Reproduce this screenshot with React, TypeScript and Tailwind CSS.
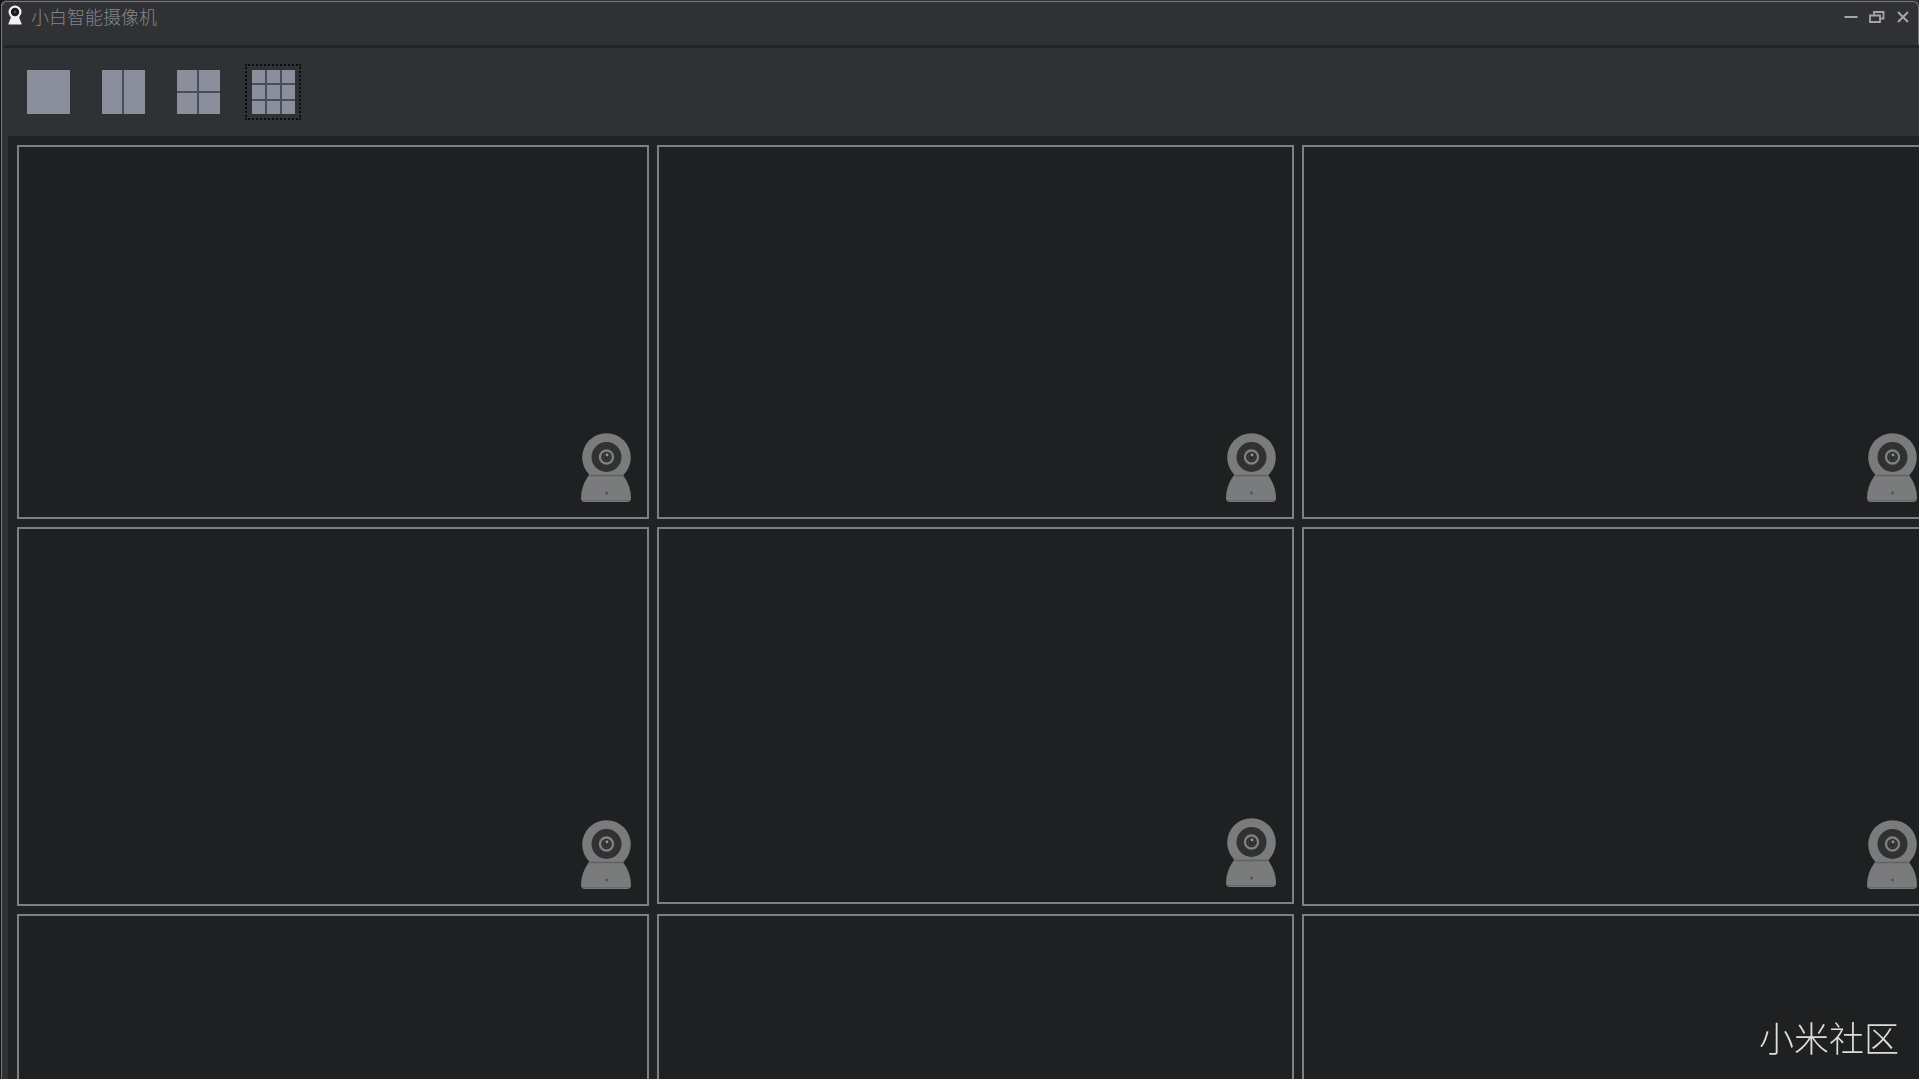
import React, { useState } from 'react';

const layouts = [
  { name: '单画面', cols: 'grid-cols-1', cells: 1 },
  { name: '双画面', cols: 'grid-cols-2', cells: 2 },
  { name: '四画面', cols: 'grid-cols-2', cells: 4 },
  { name: '九画面', cols: 'grid-cols-3', cells: 9 },
];

function Camera() {
  return (
    <svg viewBox="0 0 50 69" className="h-[69px] w-[50px]" aria-hidden="true">
      <path d="M8 42h34q8 11 8 23q0 4-4 4H4q-4 0-4-4Q0 53 8 42z" fill="#7a7b7c" />
      <circle cx="25.5" cy="24.5" r="24.3" fill="#7a7b7c" />
      <path d="M8.5 42.5h33" stroke="#606162" strokeWidth="1.5" />
      <path d="M1.5 67.5h47" stroke="#68696a" />
      <circle cx="25.5" cy="24" r="15" fill="#303132" />
      <circle cx="25.5" cy="24" r="6.5" fill="#292a2b" stroke="#7f8081" strokeWidth="2.4" />
      <circle cx="25.5" cy="24" r="3.5" fill="#2c2d2e" stroke="#454647" />
      <circle cx="26" cy="22" r="1.4" fill="#929394" />
      <circle cx="25.5" cy="60" r="1.5" fill="#555657" />
    </svg>
  );
}

function TitleBar() {
  return (
    <header className="flex h-11 shrink-0 items-start justify-between rounded-t-md border border-b-0 border-[#77787a] pl-1.5">
      <div className="flex items-start gap-2.5">
        <svg viewBox="0 0 14 20" className="mt-[3px] h-5 w-3.5" aria-hidden="true">
          <path d="M3.5 11h7l3 7.5v1H.5v-1z" fill="#f1f1f2" />
          <circle cx="7" cy="7" r="6.5" fill="#f1f1f2" />
          <circle cx="7" cy="7" r="4.2" fill="#191a25" />
          <circle cx="7" cy="7" r="1.3" fill="#4a4a68" />
        </svg>
        <h1 className="mt-0.5 -ml-px text-[18px] leading-6 font-light text-[#85868a]">小白智能摄像机</h1>
      </div>
      <div className="mr-0.5 flex">
        <button aria-label="最小化" className="flex h-[30px] w-[26px] items-center justify-center">
          <svg viewBox="0 0 16 16" className="h-4 w-4"><path d="M1.5 8h13" stroke="#a5a6a8" strokeWidth="2" /></svg>
        </button>
        <button aria-label="还原" className="flex h-[30px] w-[26px] items-center justify-center">
          <svg viewBox="0 0 16 16" className="h-4 w-4" fill="none" stroke="#a5a6a8" strokeWidth="1.8">
            <path d="M1 6.5h10v6.5H1zM5 6V3h9.5v6.5h-3.5" />
          </svg>
        </button>
        <button aria-label="关闭" className="flex h-[30px] w-[26px] items-center justify-center">
          <svg viewBox="0 0 16 16" className="h-4 w-4"><path d="M3 3l10 10M13 3L3 13" stroke="#a5a6a8" strokeWidth="2" /></svg>
        </button>
      </div>
    </header>
  );
}

function Tile({ className = '' }: { className?: string }) {
  return (
    <section className={`flex items-end justify-end border-2 border-[#7e7f80] bg-[#1f2021] pr-4 pb-[15px] ${className}`}>
      <Camera />
    </section>
  );
}

export default function App() {
  const [active, setActive] = useState(3);
  return (
    <div
      lang="zh-CN"
      className="h-screen overflow-hidden bg-[#111214] font-['Noto_Sans_CJK_SC',sans-serif]"
    >
      <div className="ml-px flex h-full flex-col rounded-tl-md border-l border-[#77787a] bg-[#303135] pt-px">
        <div className="-ml-px flex flex-col">
          <TitleBar />
        </div>
        <nav className="ml-0.5 flex h-[91px] shrink-0 items-center gap-[19px] border-t-[3px] border-[#232427] pl-4">
          {layouts.map((layout, i) => (
            <button
              key={layout.name}
              aria-label={layout.name}
              aria-pressed={active === i}
              onClick={() => setActive(i)}
              className={`flex h-14 w-14 items-center justify-center border-2 ${
                active === i ? 'border-dotted border-[#0c0d0f]' : 'border-transparent'
              }`}
            >
              <span className={`grid h-11 w-[43px] gap-0.5 bg-[#4a4e5b] ${layout.cols}`}>
                {Array.from({ length: layout.cells }, (_, n) => (
                  <span key={n} className="bg-[#8b8f9c]" />
                ))}
              </span>
            </button>
          ))}
        </nav>
        <main className="ml-1.5 min-h-0 grow overflow-hidden bg-[#212224] pt-[9px] pl-[9px]">
          <div className="-mr-4 grid grid-cols-[632fr_637fr_633fr] grid-rows-[374px_379px_379px] gap-2">
            <Tile />
            <Tile />
            <Tile />
            <Tile />
            <Tile className="mb-0.5" />
            <Tile />
            <Tile />
            <Tile />
            <Tile />
          </div>
        </main>
      </div>
      <p className="fixed right-5 bottom-4 text-[35px] leading-[52px] font-light text-[#dcdddd]">小米社区</p>
    </div>
  );
}
